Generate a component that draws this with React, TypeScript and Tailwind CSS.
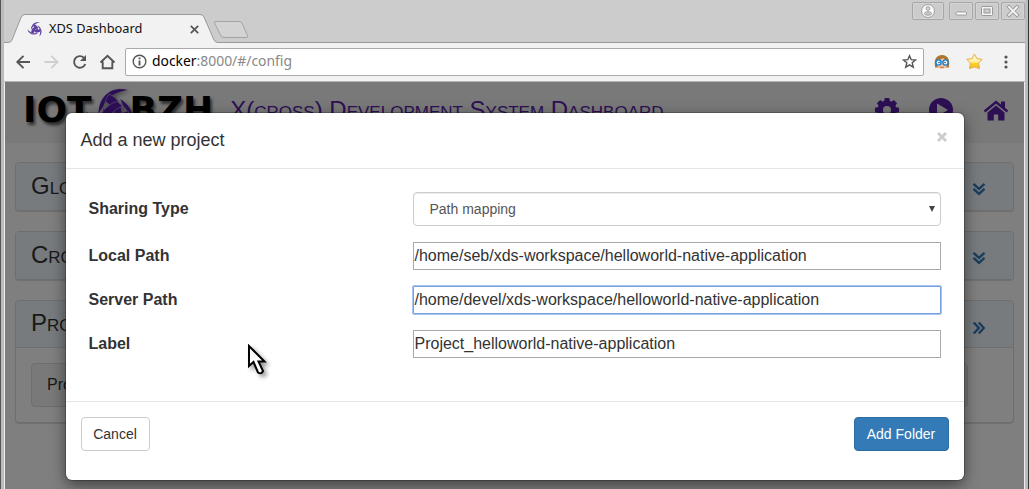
import React from "react";

const crescent = "M15 -24 C0 -28 -15 -20 -16 1 L-11 -6 C-9 -15 -1 -20.500 15 -24Z";
const strand = "M-5 -19.500 C6 -16 11 -4 8.500 9 L1 12 C3 1 -1 -7 -9 -12Z";

function Triskel({ className }: { className: string }) {
  return (
    <svg viewBox="-26 -25 52 50" className={className} fill="currentColor" overflow="visible">
      {[0, 120, 240].map((a) => (
        <g key={a} transform={`rotate(${a})`}>
          <path d={crescent} />
          <path d={strand} stroke="#d8d0e2" strokeWidth=".5" />
        </g>
      ))}
    </svg>
  );
}

function WindowButton({ wide, children }: { wide?: boolean; children: React.ReactNode }) {
  return (
    <div
      className={
        "flex h-[18px] items-center justify-center rounded-[2px] border border-[#a7a7a7] shadow-[inset_0_0_0_1px_#d4d4d4] " +
        (wide ? "mr-[5px] w-8" : "mr-[2px] w-6")
      }
    >
      <svg width="20" height="16" viewBox="0 0 20 16" fill="none">
        {children}
      </svg>
    </div>
  );
}

function TitleBar() {
  return (
    <div className="relative flex h-[43px] items-start bg-[#ccc]">
      <svg className="absolute inset-0" width="1021" height="43" fill="none">
        <path
          d="M0 42.5H4Q7 42.5 8 40L17 17.500Q18.500 14.500 21 14.500H196Q199 14.500 200 17L210 40Q211 42.500 214 42.500H1021V43H0Z"
          fill="#f2f2f2"
        />
        <path
          d="M0 42.5H4Q7 42.5 8 40L17 17.500Q18.500 14.500 21 14.500H196Q199 14.500 200 17L210 40Q211 42.500 214 42.500H1021"
          stroke="#999"
        />
        <path
          d="M212.500 21.500H235Q237 21.500 238 23L243.500 35.500Q244 37.500 242 37.500H220Q218 37.500 217 36L210.500 23Q210 21.500 212.500 21.500Z"
          fill="#d3d3d3"
          stroke="#a3a3a3"
        />
      </svg>
      <div className="relative mt-[15px] flex h-7 w-[200px] items-center pl-[24px]">
        <Triskel className="h-[15px] w-[15px] text-[#5c3ba0]" />
        <span className="ml-[6px] text-[12.800px] whitespace-nowrap text-[#111]">XDS Dashboard</span>
        <svg className="mr-[5px] ml-auto" width="9" height="9" stroke="#555" strokeWidth="1.7">
          <path d="M.8.8L8.200 8.200M8.200.8L.8 8.200" />
        </svg>
      </div>
      <div className="relative -mr-[2px] ml-auto flex pt-[2px]">
        <WindowButton wide>
          <circle cx="10" cy="8" r="6.500" fill="#f8f8f8" stroke="#a0a0a0" />
          <circle cx="10" cy="5.500" r="1.800" fill="#ddd" stroke="#999" />
          <ellipse cx="10" cy="10.500" rx="3.500" ry="1.700" fill="#ccc" stroke="#999" />
        </WindowButton>
        <WindowButton>
          <rect x="5" y="9" width="10.500" height="3" rx="1" fill="#fff" stroke="#999" />
        </WindowButton>
        <WindowButton>
          <rect x="4.500" y="3.500" width="11" height="9" rx="1" fill="#f5f5f5" stroke="#999" />
          <rect x="7" y="6" width="6" height="4" fill="#ccc" stroke="#999" />
        </WindowButton>
        <WindowButton>
          <path d="M6 4L14 12M14 4L6 12" stroke="#999" strokeWidth="3.600" strokeLinecap="square" />
          <path d="M6 4L14 12M14 4L6 12" stroke="#f5f5f5" strokeWidth="1.800" strokeLinecap="square" />
        </WindowButton>
      </div>
    </div>
  );
}

function Toolbar() {
  return (
    <div className="flex h-[39px] items-center border-b border-[#b4b4b4] bg-[#f2f2f2] pr-[10px] pb-[1px] pl-[11px]">
      <svg width="110" height="20" fill="none" stroke="#555" strokeWidth="1.900">
        <path d="M15 10H2.500M8.500 3.800L2.300 10L8.500 16.200" />
        <path d="M29.500 10H42.500M36.300 3.800L42.500 10L36.300 16.200" stroke="#d0d0d0" />
        <path d="M69 5.800A5.800 5.800 0 1 0 70.300 12" />
        <path d="M71 3V9H65Z" fill="#555" stroke="none" />
        <path d="M85.500 10.500L92.500 3.700L99.500 10.500M87.700 9.500V16.200H97.300V9.500" />
      </svg>
      <div className="flex h-7 w-[799px] items-center rounded-[2px] border border-[#aaa] bg-white pl-[6px]">
        <svg width="15" height="15" fill="none" stroke="#555" strokeWidth="1.400">
          <circle cx="7.500" cy="7.500" r="6.300" />
          <path d="M7.500 6.500V11.500M7.500 3.500V5.200" strokeWidth="1.900" />
        </svg>
        <span className="ml-[5px] text-[13.900px] text-[#888]">
          <span className="text-black">docker</span>:8000/#/config
        </span>
        <svg className="mr-[6px] ml-auto" width="15" height="15" fill="none" stroke="#555" strokeWidth="1.400">
          <path d="M7.500 1.700L9.200 5.700L13.500 6L10.200 8.800L11.300 13.200L7.500 10.800L3.700 13.200L4.800 8.800L1.500 6L5.800 5.700Z" />
        </svg>
      </div>
      <svg className="ml-[10px]" width="16" height="16">
        <path d="M1 12C0 6 2 1 8 1S16 6 15 12L15 13.500H1Z" fill="#ad762c" />
        <path d="M3 6Q7 6 9 4Q11 6 13 7V12Q11 15 8 15T3 12Z" fill="#f5c19d" />
        <circle cx="4.500" cy="8.500" r="2.600" fill="#e6f5ff" stroke="#1682d5" strokeWidth="1.400" />
        <circle cx="11.500" cy="8.500" r="2.600" fill="#e6f5ff" stroke="#1682d5" strokeWidth="1.400" />
        <circle cx="5" cy="8.500" r=".7" fill="#222" />
        <circle cx="11" cy="8.500" r=".7" fill="#222" />
        <path d="M6 13.300H10" stroke="#c56f50" />
      </svg>
      <svg className="ml-[16px]" width="17" height="17">
        <defs>
          <linearGradient id="gold" x1="0" y1="0" x2="0" y2="1">
            <stop offset="0" stopColor="#fff6cc" />
            <stop offset=".55" stopColor="#ffefa0" />
            <stop offset=".65" stopColor="#f9d21c" />
            <stop offset="1" stopColor="#f1bf1d" />
          </linearGradient>
        </defs>
        <path
          d="M8.500 1L10.900 5.600L16.200 6.300L12.600 10.200L13.500 15.600L8.500 14L3.500 15.600L4.400 10.200L.8 6.300L6.100 5.600Z"
          fill="url(#gold)"
          stroke="#e5ad56"
          strokeLinejoin="round"
        />
      </svg>
      <svg className="ml-[20px]" width="6" height="16" fill="#555">
        <circle cx="3" cy="3" r="1.600" />
        <circle cx="3" cy="8" r="1.600" />
        <circle cx="3" cy="13" r="1.600" />
      </svg>
    </div>
  );
}

const teeth = [0, 45, 90, 135, 180, 225, 270, 315];

function SiteHeader() {
  return (
    <div className="flex h-[61px] items-start bg-[#f2f2f2] text-[#5a1fa8]">
      <div className="flex pt-[7px] pl-[18px] font-['DejaVu_Sans'] text-[36px] leading-[42px] font-bold text-black [text-shadow:2px_3px_3px_#0009]">
        <span>IOT</span>
        <Triskel className="-mt-[1px] mr-[-3px] ml-[-3px] h-[49px] w-[49px] text-[#5b1fb0] drop-shadow-[2px_2px_2px_#0007]" />
        <span className="-ml-[5px]">BZH</span>
      </div>
      <h1 className="mt-[15px] ml-[17px] text-[24px] leading-[26px] whitespace-nowrap [font-variant:small-caps]">
        X(cross) Development System Dashboard
      </h1>
      <div className="mt-[15px] mr-[15px] ml-auto flex">
        <svg className="mr-[28px]" width="26" height="26" viewBox="-13 -13 26 26" fill="currentColor">
          {teeth.map((a) => (
            <path key={a} d="M-3 -8L-2.300 -12H2.300L3 -8Z" transform={`rotate(${a})`} />
          ))}
          <circle r="6.800" fill="none" stroke="currentColor" strokeWidth="5.500" />
        </svg>
        <svg className="mr-[29px]" width="26" height="26" viewBox="-13 -13 26 26">
          <circle r="12" fill="currentColor" />
          <path d="M-4 -6.500L7 0L-4 6.500Z" fill="#f2f2f2" />
        </svg>
        <svg className="mt-px" width="26" height="26">
          <path d="M1.500 13.500L13 4L24.500 13.500" fill="none" stroke="currentColor" strokeWidth="2.400" />
          <path d="M18 3.500H22V12L18 8.500Z" fill="currentColor" />
          <path d="M4.500 14.500L13 7.500L21.500 14.500V22.500H15.200V16.500H10.800V22.500H4.500Z" fill="currentColor" />
        </svg>
      </div>
    </div>
  );
}

function Panel({ title, open, children }: { title: string; open?: boolean; children?: React.ReactNode }) {
  return (
    <section className="rounded-[4px] border border-[#ddd] bg-white shadow-[0_1px_1px_#0002]">
      <div
        className={
          "flex h-[46.500px] items-center justify-between rounded-t-[3px] bg-[#eef6fc] pr-[27px] pb-[1px] pl-[15px] " +
          (open ? "border-b border-[#ddd]" : "rounded-b-[3px]")
        }
      >
        <h3 className="text-[24px] leading-[26px] text-[#333] [font-variant:small-caps]">{title}</h3>
        <svg
          className={open ? "mt-[9px] -rotate-90" : "mt-[7px]"}
          width="14"
          height="14"
          fill="none"
          stroke="#337ab7"
          strokeWidth="2.400"
        >
          <path d="M1.500 1.800L7 6.800L12.500 1.800M1.500 6.800L7 11.800L12.500 6.800" />
        </svg>
      </div>
      {children}
    </section>
  );
}

function Field({ label, value, focused }: { label: string; value: string; focused?: boolean }) {
  return (
    <div className="flex h-7 items-center">
      <label className="w-[324.500px] font-bold">{label}</label>
      <div
        className={
          "flex h-7 w-[528px] items-center border px-[0.500px] whitespace-nowrap " +
          (focused
            ? "rounded-[1px] border-[#769dde] shadow-[0_0_0_1px_#a9c5f1]"
            : "border-[#a9a9a9]")
        }
      >
        {value}
      </div>
    </div>
  );
}

function ProjectDialog() {
  return (
    <div
      role="dialog"
      className="absolute top-[113px] left-[66px] flex h-[367px] w-[898px] flex-col rounded-[6px] bg-white text-[16px] text-[#333] shadow-[0_0_0_1px_#0003,0_5px_15px_#00000080]"
    >
      <div className="flex h-[56px] items-center justify-between border-b border-[#e5e5e5] pr-[15px] pl-[14.500px]">
        <h4 className="text-[18px]">Add a new project</h4>
        <svg className="mr-[2px] mb-[7px]" width="10" height="10" stroke="#ccc" strokeWidth="2.800">
          <path d="M1 1L9 9M9 1L1 9" />
        </svg>
      </div>
      <div className="flex h-[232px] flex-col gap-4 pt-[23px] pl-[22.500px]">
        <div className="flex h-[34px] items-center">
          <label className="w-[324.500px] font-bold">Sharing Type</label>
          <div className="flex h-[34px] w-[528px] items-center justify-between rounded-[4px] border border-[#ccc] pr-[5px] pl-[15.500px] text-[14px] text-[#555] shadow-[inset_0_1px_1px_#00000013]">
            <span>Path mapping</span>
            <svg width="6" height="8">
              <path d="M0 1H6L3 7Z" fill="#444" />
            </svg>
          </div>
        </div>
        <Field label="Local Path" value="/home/seb/xds-workspace/helloworld-native-application" />
        <Field label="Server Path" value="/home/devel/xds-workspace/helloworld-native-application" focused />
        <Field label="Label" value="Project_helloworld-native-application" />
      </div>
      <div className="flex justify-between border-t border-[#e5e5e5] p-[15px] text-[14px]">
        <button className="h-[34px] w-[69px] rounded-[4px] border border-[#ccc] bg-white pr-[1px]">Cancel</button>
        <button className="h-[34px] w-[95px] rounded-[4px] border border-[#2e6da4] bg-[#337ab7] pr-[1px] text-white">
          Add Folder
        </button>
      </div>
    </div>
  );
}

export default function App() {
  return (
    <div className="relative h-[489px] w-[1029px] overflow-hidden bg-[#ccc] font-['Liberation_Sans',sans-serif]">
      <div className="flex h-full flex-col border-r border-l border-r-[#333] border-l-[#555]">
        <div className="flex h-full flex-col border-r-[3px] border-l-[3px] border-[#bbb]">
          <div className="font-['Noto_Sans',sans-serif]">
            <TitleBar />
            <Toolbar />
          </div>
          <div className="relative flex-1 border-r border-l border-[#eee] bg-white">
            <SiteHeader />
            <main className="flex flex-col gap-[20.500px] px-[10px] pt-[19px]">
              <Panel title="Global" />
              <Panel title="Cross" />
              <Panel title="Projects" open>
                <div className="p-[15px]">
                  <div className="flex h-[44px] w-[937px] items-center rounded-[4px] border border-[#ddd] bg-[#f2f2f2] px-[15px] text-[16px] text-[#333]">
                    Project
                  </div>
                </div>
              </Panel>
            </main>
            <div className="absolute inset-0 bg-black/50" />
          </div>
        </div>
      </div>
      <ProjectDialog />
      <svg
        className="absolute top-[344px] left-[247px] drop-shadow-[3px_3px_2px_#0006]"
        width="22"
        height="34"
        viewBox="0 0 22 34"
      >
        <path
          d="M2 2V22L6.500 18L11 28.500Q14.500 30.500 16 27L11.500 17.500H17.500Z"
          fill="white"
          stroke="black"
          strokeWidth="2"
        />
      </svg>
    </div>
  );
}
